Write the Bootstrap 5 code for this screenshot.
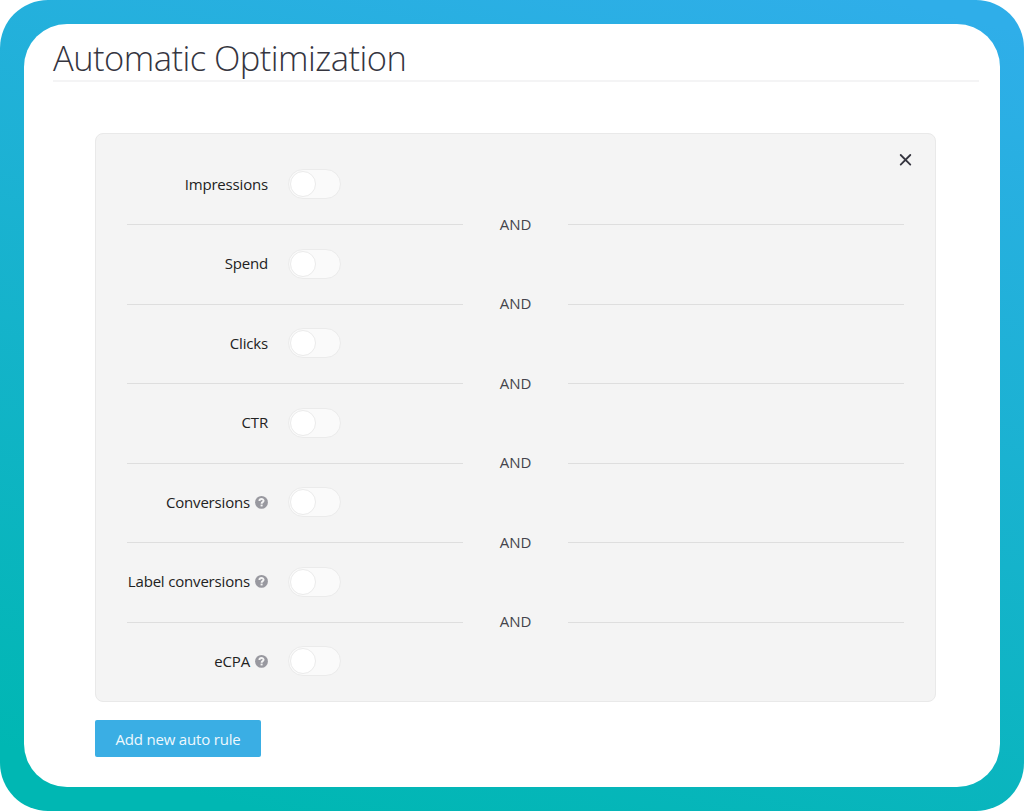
<!DOCTYPE html>
<html lang="en">
<head>
  <meta charset="UTF-8" />
  <title>Automatic Optimization</title>
  <meta name="viewport" content="width=device-width, initial-scale=1" />
  <link href="https://cdn.jsdelivr.net/npm/bootstrap@5.3.3/dist/css/bootstrap.min.css" rel="stylesheet">
  <style>
    body {
      background: #fff;
      font-family: "Open Sans", sans-serif;
      font-size: 15px;
      color: #222;
    }
    .page-frame {
      height: 811px;
      padding: 24px 24.4px;
      border-radius: 48px;
      background: linear-gradient(14deg, #00b7b3 6%, #2faee9 97%);
    }
    .page-sheet {
      height: 762.5px;
      padding: 13px 21px 0 28.6px;
      border-radius: 43px;
    }
    .page-title {
      height: 45px;
      font-size: 34.5px;
      line-height: 42px;
      font-weight: 300;
      letter-spacing: -0.53px;
      color: #35353f;
      border-bottom: 2px solid #f4f4f5;
    }
    .rules-area {
      margin: 51px 42.6px 0 42px;
    }
    .rules-panel {
      height: 569px;
      padding: 25.2px 31px 0;
      background: #f4f4f4;
      border: 1px solid #e9e9e9;
      border-radius: 8px;
    }
    .close-btn {
      top: 19px;
      right: 23px;
      width: 13px;
      height: 13px;
    }
    .rule-row {
      height: 50px;
    }
    .rule-label {
      width: 141px;
      margin-right: 20px;
      gap: 5px;
      letter-spacing: -0.18px;
    }
    .rule-switch {
      width: 53px;
      height: 30px;
      padding: 1px;
      background: #fafafa;
      border: 1px solid #ebebeb;
      border-radius: 15px;
    }
    .rule-switch span {
      width: 26px;
      height: 26px;
      background: #fff;
      border: 1px solid #ebebeb;
      border-radius: 50%;
    }
    .rule-and {
      height: 29.5px;
      color: #44444c;
    }
    .rule-line {
      height: 1px;
      margin-top: 1.4px;
      background: #dedede;
    }
    .rule-and-text {
      width: 105px;
      letter-spacing: -0.1px;
    }
    .add-btn {
      width: 166px;
      height: 37px;
      margin-top: 18px;
      font-size: 15px;
      letter-spacing: -0.18px;
      color: #eef8fd;
      background: #3aaee4;
      border-radius: 2px;
    }
    .add-btn span {
      padding-top: 2px;
    }
  </style>
</head>
<body>

<div class="page-frame">
  <div class="page-sheet bg-white">
    <h1 class="page-title mb-0">Automatic Optimization</h1>

    <div class="rules-area">
      <div class="rules-panel position-relative">
        <button class="close-btn position-absolute d-flex p-0 border-0 bg-transparent" aria-label="Close">
          <svg width="13" height="13" viewBox="0 0 13 13" fill="none" stroke="#35353f" stroke-width="1.8" stroke-linecap="round"><path d="M1.7 2 11.3 11.6M11.3 2 1.7 11.6"/></svg>
        </button>
        <div id="rulesList"></div>
      </div>
      <button class="add-btn btn border-0 p-0 d-block"><span class="d-block">Add new auto rule</span></button>
    </div>
  </div>
</div>

<script>
  const rules = [
    { name: "Impressions" },
    { name: "Spend" },
    { name: "Clicks" },
    { name: "CTR" },
    { name: "Conversions", help: true },
    { name: "Label conversions", help: true },
    { name: "eCPA", help: true }
  ];

  const helpIcon = `
    <svg class="flex-shrink-0" width="13" height="13" viewBox="0 0 13 13">
      <circle cx="6.5" cy="6.4" r="6.4" fill="#98989f"/>
      <path d="M4.4 5C4.5 2.4 8.6 2.5 8.6 4.8C8.6 6.2 6.6 6.1 6.6 7.7" fill="none" stroke="#f4f4f4" stroke-width="1.9"/>
      <rect x="5.6" y="8.6" width="2" height="1.8" fill="#f4f4f4"/>
    </svg>`;

  const andRow = `
    <div class="rule-and d-flex align-items-center">
      <div class="rule-line flex-fill"></div>
      <div class="rule-and-text text-center">AND</div>
      <div class="rule-line flex-fill"></div>
    </div>`;

  document.getElementById("rulesList").innerHTML = rules.map(rule => `
    <div class="rule-row d-flex align-items-center">
      <div class="rule-label d-flex align-items-center justify-content-end text-nowrap">
        <span>${rule.name}</span>${rule.help ? helpIcon : ""}
      </div>
      <div class="rule-switch" role="switch" aria-checked="false"><span class="d-block"></span></div>
    </div>`).join(andRow);
</script>

<script src="https://cdn.jsdelivr.net/npm/bootstrap@5.3.3/dist/js/bootstrap.bundle.min.js"></script>
</body>
</html>
